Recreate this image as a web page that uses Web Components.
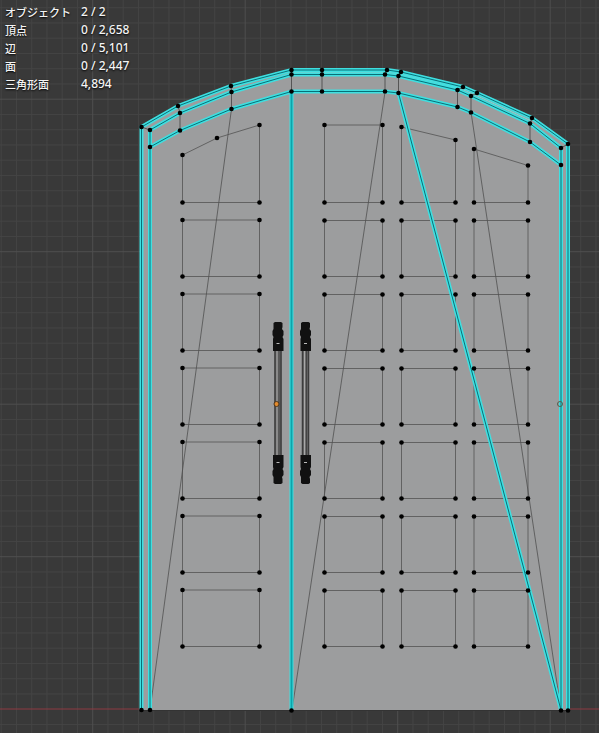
<!DOCTYPE html>
<html lang="ja">
<head>
<meta charset="utf-8">
<title>3D Viewport</title>
<style>
html, body { margin: 0; height: 100%; background: #393939; }
</style>
</head>
<body>
<mesh-viewport>
  <door-wireframe></door-wireframe>
  <scene-stats>
    <stat-row label="オブジェクト">2 / 2</stat-row>
    <stat-row label="頂点">0 / 2,658</stat-row>
    <stat-row label="辺">0 / 5,101</stat-row>
    <stat-row label="面">0 / 2,447</stat-row>
    <stat-row label="三角形面">4,894</stat-row>
  </scene-stats>
</mesh-viewport>
<script>
class MeshViewport extends HTMLElement {
  constructor() {
    super();
    this.attachShadow({ mode: 'open' }).innerHTML = `
      <style>
        :host { display: grid; grid-template: minmax(0, 1fr) / minmax(0, 1fr); height: 100vh; overflow: hidden; background: #393939; }
        ::slotted(*) { grid-area: 1 / 1; }
      </style><slot></slot>`;
  }
}
class SceneStats extends HTMLElement {
  constructor() {
    super();
    this.attachShadow({ mode: 'open' }).innerHTML = `
      <style>
        :host { display: flex; flex-direction: column; align-self: start; justify-self: start; padding: 3px 5px; z-index: 1;
          font: 500 12px/18px "Noto Sans", "Noto Sans CJK JP", sans-serif; color: #f4f4f4; text-shadow: 0 1px 2px #000; }
      </style><slot></slot>`;
  }
}
class StatRow extends HTMLElement {
  connectedCallback() {
    const root = this.attachShadow({ mode: 'open' });
    root.innerHTML = `
      <style>
        :host { display: grid; grid-template-columns: 76px auto; height: 18px; white-space: nowrap; }
        .label { font-family: "Noto Sans CJK JP", sans-serif; font-size: 11px; }
      </style><span class="label"></span><span><slot></slot></span>`;
    root.querySelector('.label').textContent = this.getAttribute('label');
  }
}
class DoorWireframe extends HTMLElement {
  constructor() {
    super();
    const outer = [[141.5,127],[178,106],[231,86],[291.5,70],[322,70],[387,70],[401,72],[463,87],[477,93],[532,118],[568,144]];
    const middle = [[150,130],[180,113],[231.5,92],[291.5,74.5],[322,74.5],[385,74.5],[398.5,76],[457.5,90],[471,96],[530,123.5],[561,148]];
    const inner = [[150,147],[180,130.5],[231.5,109],[291.5,91.5],[322,91.5],[385,91.5],[398.5,93],[457.5,107],[471,112.5],[530,142],[561,165]];
    const d = (pts) => 'M' + pts.map((p) => p.join(' ')).join('L');
    let minor = '', major = '';
    for (let i = -6; i < 34; i++) {
      const x = 92.7 + i * 15.25;
      if (i % 10) minor += `M${x} 0V733`; else major += `M${x} 0V733`;
    }
    for (let i = -6; i < 42; i++) {
      const y = 99.2 + i * 15.25;
      if (i % 10) minor += `M0 ${y}H599`; else if (i !== 40) major += `M0 ${y}H599`;
    }
    const dots = [...outer, ...middle, ...inner, [141.5,710],[150,710],[291.5,710.5],[561,710.5],[568,710.5]];
    let panels = '';
    const panel = (pts) => { panels += d(pts) + 'Z'; dots.push(...pts); };
    panel([[182.5,155],[217,138],[259.5,125],[259.5,202.5],[182.5,202.5]]);
    panel([[324.5,125],[382.5,125],[382.5,202.5],[324.5,202.5]]);
    panel([[401.5,127],[455.5,140],[455.5,202.5],[401.5,202.5]]);
    panel([[474,149],[528,165.5],[528,202.5],[474,202.5]]);
    for (let r = 0; r < 6; r++) {
      [[182.5,259.5,220],[324.5,382.5,220.5],[401.5,455.5,220.5],[474,528,220.5]].forEach(([a, b, top]) => {
        const t = top + r * 74, e = 276.5 + r * 74;
        panel([[a,t],[b,t],[b,e],[a,e]]);
      });
    }
    const ties = [1,2,3,4,5,6,7,8,9].map((i) => d([outer[i], middle[i], inner[i]])).join('') + d([outer[0], middle[0]]) + d([outer[10], middle[10]]);
    const seams = [
      d([[141.5,710], ...outer, [568,710]]),
      d([[150,710], ...middle, [561,710]]),
      d(inner), 'M291.5 91V710', 'M398.5 93L561 710'
    ].join('');
    const between = d(outer.slice(3).map((p, i) => [(p[0] + middle[i + 3][0]) / 2, (p[1] + middle[i + 3][1]) / 2]).slice(0, 7));
    this.attachShadow({ mode: 'open' }).innerHTML = `
      <style>
        :host { display: block; min-width: 0; min-height: 0; }
        svg { display: block; width: 100%; height: 100%; }
        path { fill: none; }
      </style>
      <svg viewBox="0 0 599 733" preserveAspectRatio="xMidYMid slice" role="img" aria-label="Door mesh">
        <defs>
          <g id="grip">
            <path d="M-3 6H3L4.500 7V11L4 13L5.500 15V19L4.500 21L5.500 23V35H-5V23L-4.500 21L-5.500 19V15L-4.500 13V7Z" style="fill:#111"/>
            <path d="M-1.500 27.500H1.500" stroke="#bbb"/>
          </g>
          <g id="handle">
            <path d="M0 348V460" stroke="#6c6c6c" stroke-width="7"/>
            <path d="M-3 348V460M3 348V460" stroke="#3c3c3c" stroke-width="1.500"/>
            <path d="M-1 348V460" stroke="#a8a8a8" stroke-width="1"/>
            <path d="M1 348V460" stroke="#444" stroke-width="1"/>
            <use href="#grip" y="316"/>
            <use href="#grip" transform="translate(0 490) scale(1 -1)"/>
          </g>
        </defs>
        <path d="${minor}" stroke="#444"/>
        <path d="${major}" stroke="#4f4f4f"/>
        <path d="M0 709H599" stroke="#8e3a43"/>
        <path d="${d([[141.5,710], ...outer, [568,710]])}Z" style="fill:#9c9d9e"/>
        <path d="M141 710.500H568" stroke="#333"/>
        <path d="${panels}" stroke="#626262"/>
        <path d="M231.500 109L150 710M385 92L292 710M471 112L561 710" stroke="#505050" stroke-width=".8"/>
        <path d="${between}" stroke="#7ad9da" stroke-width="1"/>
        <path d="${seams}" stroke="#3fdfe0" stroke-width="4"/>
        <path d="${seams}" stroke="#087078" stroke-width="1"/>
        <path d="M291.500 93V709" stroke="#0da3aa" stroke-width="2"/>
        <path d="${ties}" stroke="#555"/>
        ${dots.map(([x, y]) => `<circle cx="${x}" cy="${y}" r="2.300"/>`).join('')}
        <use href="#handle" x="278"/><use href="#handle" x="305.500"/>
        <circle cx="276.500" cy="404" r="2.500" fill="#e28a2c" stroke="#4b351d"/>
        <circle cx="560" cy="404" r="2.500" fill="none" stroke="#555e4c"/>
      </svg>`;
  }
}
customElements.define('mesh-viewport', MeshViewport);
customElements.define('scene-stats', SceneStats);
customElements.define('stat-row', StatRow);
customElements.define('door-wireframe', DoorWireframe);
</script>
</body>
</html>
